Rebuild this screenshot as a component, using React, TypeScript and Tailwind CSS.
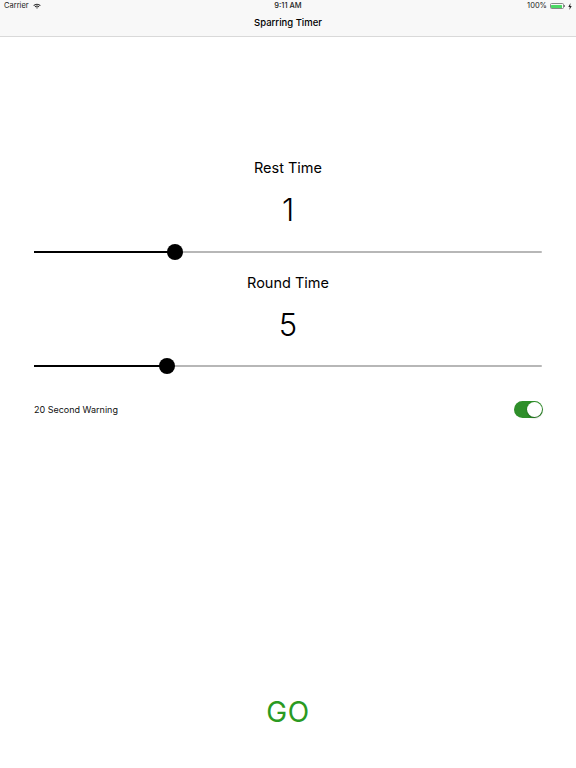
import { useState } from "react";

const font = { fontFamily: 'Inter, "Liberation Sans", Arial, sans-serif' };

function Slider({ value, max }: { value: number; max: number }) {
  const pct = (value / max) * 100;
  return (
    <div className="relative h-4 mx-[34px] flex items-center">
      <div className="h-[2px] w-full bg-[#b7b7b7] rounded-full" />
      <div className="absolute left-0 h-[2px] bg-black" style={{ width: `${pct}%` }} />
      <div
        className="absolute w-4 h-4 rounded-full bg-black -translate-x-1/2"
        style={{ left: `${pct}%` }}
      />
    </div>
  );
}

export default function App() {
  const [warn, setWarn] = useState(true);

  return (
    <div className="w-[576px] h-[768px] bg-white flex flex-col" style={font}>
      {/* Status + nav bar */}
      <div className="bg-[#f8f8f8] border-b border-[#d9d9d9] h-[37px] flex flex-col">
        <div className="h-[12px] flex items-center justify-between px-[4px] text-[7.5px] text-[#222]">
          <div className="flex items-center gap-1 w-[100px]">
            <span>Carrier</span>
            <svg width="8" height="6" viewBox="0 0 8 6">
              <path d="M0.3 2.2 A5.2 5.2 0 0 1 7.7 2.2 L7 2.9 A4.2 4.2 0 0 0 1 2.9 Z" fill="#222" />
              <path d="M1.7 3.5 A3.3 3.3 0 0 1 6.3 3.5 L5.6 4.2 A2.3 2.3 0 0 0 2.4 4.2 Z" fill="#222" />
              <path d="M3.1 4.8 A1.3 1.3 0 0 1 4.9 4.8 L4 5.8 Z" fill="#222" />
            </svg>
          </div>
          <span className="font-medium">9:11 AM</span>
          <div className="flex items-center justify-end gap-[3px] w-[100px]">
            <span>100%</span>
            <div className="flex items-center">
              <div className="w-[14px] h-[6px] border border-[#888] rounded-[1.5px] p-[0.5px]">
                <div className="w-full h-full bg-[#4cd964] rounded-[0.5px]" />
              </div>
              <div className="w-[1px] h-[2px] bg-[#888]" />
            </div>
            <svg width="4" height="7" viewBox="0 0 4 7">
              <path d="M2.5 0 L0.3 3.9 H1.8 L1.4 7 L3.7 3 H2.2 Z" fill="#222" />
            </svg>
          </div>
        </div>
        <div className="flex-1 flex items-center justify-center text-[9.5px] font-medium text-black pb-[1px]">
          Sparring Timer
        </div>
      </div>

      {/* Rest time */}
      <div className="mt-[122px] flex flex-col items-center">
        <div className="text-[14.5px] leading-[18px] text-black">Rest Time</div>
        <div className="mt-[16px] text-[31px] leading-[34px] font-light text-black">1</div>
      </div>
      <div className="mt-[17px]">
        <Slider value={10} max={36} />
      </div>

      {/* Round time */}
      <div className="mt-[14px] flex flex-col items-center">
        <div className="text-[14.5px] leading-[18px] text-black">Round Time</div>
        <div className="mt-[16px] text-[31px] leading-[34px] font-light text-black">5</div>
      </div>
      <div className="mt-[16px]">
        <Slider value={9.4} max={36} />
      </div>

      {/* Warning toggle */}
      <div className="mt-[27px] mx-[34px] flex items-center justify-between">
        <span className="text-[9px] text-[#111]">20 Second Warning</span>
        <button
          onClick={() => setWarn(!warn)}
          className={`w-[29px] h-[17px] rounded-full p-[1px] flex items-center ${
            warn ? "bg-[#2f8f2a] justify-end" : "bg-[#e5e5e5] justify-start"
          } -mr-[1px]`}
        >
          <span className="w-[15px] h-[15px] rounded-full bg-white shadow-[0_1px_2px_rgba(0,0,0,0.3)]" />
        </button>
      </div>

      <div className="flex-1" />

      <div className="pb-[41px] flex justify-center">
        <button className="text-[28px] leading-[30px] text-[#2a9a22] tracking-wide">GO</button>
      </div>
    </div>
  );
}
